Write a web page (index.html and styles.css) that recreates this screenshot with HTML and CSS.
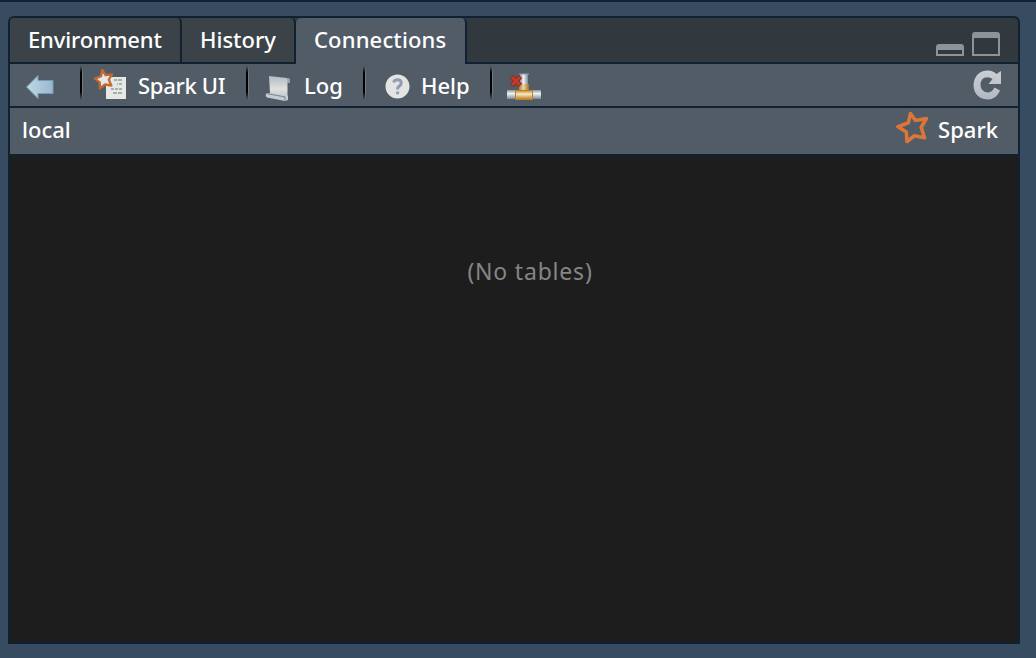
FILE: index.html
```html
<!DOCTYPE html>
<html lang="en">
<head>
<meta charset="utf-8">
<title>Connections</title>
<link rel="stylesheet" href="styles.css">
</head>
<body>
<main class="panel">
  <nav class="tabs">
    <div class="tab tab-env"><span class="t-env">Environment</span></div>
    <div class="tab tab-history"><span class="t-history">History</span></div>
    <div class="tab tab-active"><span class="t-conn">Connections</span></div>
    <div class="window-controls">
      <svg width="28" height="12" viewBox="0 0 28 12"><path fill="#8d9498" fill-rule="evenodd" d="M0 12V3Q0 0 3 0H25Q28 0 28 3V12ZM2 6V10H26V6Z"/></svg>
      <svg width="28" height="24" viewBox="0 0 28 24"><path fill="#8d9498" fill-rule="evenodd" d="M0 24V3Q0 0 3 0H25Q28 0 28 3V24ZM2 6V22H26V6Z"/></svg>
    </div>
  </nav>
  <div class="toolbar">
    <svg class="back" width="30" height="26" viewBox="0 0 30 26"><defs><linearGradient id="arrow" x2="1"><stop stop-color="#bfd8e5"/><stop offset="1" stop-color="#98b7cf"/></linearGradient></defs><path d="M1.500 13 13 1.500V6.500H28V19.500H13V24.500Z" fill="url(#arrow)" stroke="#779bb5"/></svg>
    <i class="sep"></i>
    <svg class="spark-icon" width="32" height="32" viewBox="0 0 32 32"><path fill="#e7e7e3" d="M12 9H32V31H12Z"/><path d="M20 12h3m1 0h4M23 16h1m1 0h3M17 21h3m1 0h3m1 0h3M19 25h4m1 0h4" stroke="#8aa09f" stroke-width="1.7"/><path d="M8.200 1.800 11.500 7.200 18 6.500 14.800 11.600 17.300 17.500 11 16.500 6 20.400 5.800 14.300 1 10.600 7.100 8.200Z" fill="#e4e7e9" stroke="#c76833" stroke-width="2.300" stroke-linejoin="round"/></svg>
    <span class="t-ui">Spark UI</span>
    <i class="sep sep-log"></i>
    <svg class="log-icon" width="26" height="27" viewBox="0 0 26 27"><defs><linearGradient id="paper" x2="0" y2="1"><stop stop-color="#aebbc5"/><stop offset=".6" stop-color="#e1e1de"/><stop offset="1" stop-color="#bdc4c8"/></linearGradient></defs><path d="M4 1 22 3Q25 2.500 25 5.500T22.500 8V23L2 19 5 18Z" fill="url(#paper)"/><path d="M22 3q3-.5 3 2.500t-2.500 2.500z" fill="#91a5b2"/><path d="M1 18.500 5 18 20 21 23 20.500V25L20 26 2 22.500Q0 20.500 1 18.500Z" fill="#c3ccd1"/><path d="m1.500 18.500 19 3.500M19 22q2 1.500 1 3.500" fill="none" stroke="#758693"/></svg>
    <span class="t-log">Log</span>
    <i class="sep sep-help"></i>
    <svg class="help-icon" width="25" height="25" viewBox="0 0 25 25"><circle cx="12.500" cy="12.500" r="12" fill="#e4e4e2"/><path d="M8.700 8.500Q9.200 5.800 12.700 5.800 16.200 5.900 16.200 8.900 16.200 10.900 14 12.300 12.600 13.300 12.600 15.600M12.600 17.600V20.200" fill="none" stroke="#8f9db5" stroke-width="3"/></svg>
    <span class="t-help">Help</span>
    <i class="sep sep-disconnect"></i>
    <svg class="pipe-icon" width="34" height="28" viewBox="0 0 34 28"><defs><linearGradient id="steel" x2="0" y2="1"><stop stop-color="#8894a9"/><stop offset=".4" stop-color="#f2f2f2"/><stop offset="1" stop-color="#7f8898"/></linearGradient><linearGradient id="steel-v" x2="1"><stop stop-color="#8894a9"/><stop offset=".45" stop-color="#eff2f4"/><stop offset="1" stop-color="#7d899c"/></linearGradient><linearGradient id="brass" x2="0" y2="1"><stop stop-color="#c58c37"/><stop offset=".4" stop-color="#f7eac2"/><stop offset="1" stop-color="#b9781f"/></linearGradient><linearGradient id="brass-v" x2="1"><stop stop-color="#b78030"/><stop offset=".45" stop-color="#eed59c"/><stop offset="1" stop-color="#a96f1c"/></linearGradient></defs><path d="M13 1h8v10h-8z" fill="url(#steel-v)"/><path d="M12 1h10" stroke="#939eae"/><path d="M0 17h34v9H0z" fill="url(#steel)"/><path d="M12 11h10v7H12z" fill="url(#brass-v)"/><path d="M8.500 17.500h17v9h-17z" fill="url(#brass)" stroke="#b98029"/><path d="m4.500 3.500 9 9m0-9-9 9" stroke="#8d2d20" stroke-width="4.800"/><path d="m5 4 8 8m0-8-8 8" stroke="#c03c28" stroke-width="3"/></svg>
    <svg class="refresh" width="29" height="30" viewBox="0 0 29 30"><defs><linearGradient id="refresh" x2="0" y2="1"><stop stop-color="#cbcfd4"/><stop offset="1" stop-color="#b2b8c3"/></linearGradient></defs><path fill="url(#refresh)" d="M23.500 4 28 1V14H15.500L19.500 9Q17.500 7.300 14.500 7.300 7.500 7.500 7.500 15 8 22 14.500 22.500 19 22.500 21.500 17.500L27 20.500Q23.500 29.500 14.500 29.500 1 28.500 .5 15 1.500 1 15 .5 20 .7 23.500 4Z"/></svg>
  </div>
  <header class="connection">
    <span class="t-local">local</span>
    <svg class="star" width="33" height="33" viewBox="0 0 33 33"><path d="M14.500 2.500 19.500 9.500 30.500 7.500 25.200 16.300 28.500 26.800 18.500 24.800 11 30.500 10.300 21 2 15.800 12.300 11.800Z" fill="none" stroke="#d97638" stroke-width="3.600" stroke-linejoin="round"/></svg>
    <span class="t-spark">Spark</span>
  </header>
  <section class="content"><span class="t-empty">(No tables)</span></section>
</main>
</body>
</html>
```
FILE: styles.css
```css
* { box-sizing: border-box; }
body {
  margin: 0;
  height: 658px;
  padding: 14px 16px 14px 8px;
  border-top: 2px solid #102131;
  background: #384c61;
  color: #fff;
  font: 500 22px/30px "Noto Sans", sans-serif;
  overflow: hidden;
}
svg { display: block; flex: none; }
span { white-space: nowrap; }
.panel {
  height: 628px;
  border: 2px solid #102131;
  border-radius: 6px 6px 0 0;
  background: #1d1d1d;
  display: flex;
  flex-direction: column;
  overflow: hidden;
}
.tabs {
  display: flex;
  height: 46px;
  background: linear-gradient(#102131, #102131) 0 44px / 100% 2px no-repeat #31383e;
}
.tab {
  height: 46px;
  padding: 6px 0 0 18px;
  border-right: 2px solid #102131;
  border-bottom: 2px solid #102131;
  border-radius: 0 5px 0 0;
  background: #3b4349;
}
.tab-env { width: 172px; letter-spacing: -.15px; }
.tab-history { width: 114px; }
.tab-active { width: 171px; background: #515c67; border-bottom: 0; border-radius: 5px 5px 0 0; letter-spacing: .15px; }
.window-controls { display: flex; align-items: flex-end; gap: 8px; margin: 0 18px 8px auto; }
.toolbar {
  display: flex;
  align-items: flex-start;
  height: 44px;
  background: #515c67;
  border-bottom: 2px solid #102131;
}
.toolbar span { flex: none; margin-top: 6px; }
.t-ui { width: 108px; letter-spacing: -.3px; }
.t-log { width: 59px; }
.t-help { width: 69px; }
.sep {
  width: 4px;
  height: 34px;
  margin-top: 2px;
  flex: none;
  background:
    linear-gradient(transparent, #000 20%, #000 75%, transparent) 0 0 / 2px 100% no-repeat,
    linear-gradient(transparent, #707a83 25%, #707a83 75%, transparent) 2px 0 / 1px 100% no-repeat;
}
.back { margin: 10px 25px 0 15px; }
.spark-icon { margin: 4px 12px 0 10px; }
.log-icon { margin: 11px 13px 0 15px; }
.help-icon { margin: 10px 11px 0 18px; }
.pipe-icon { margin: 9px 0 0 13px; }
.refresh { margin: 6px 16px 0 auto; }
.connection {
  display: flex;
  height: 48px;
  padding: 6px 20px 0 12px;
  background: #515c67;
  border-bottom: 2px solid #102131;
}
.star { margin: -3px 9px 0 auto; }
.content {
  display: flex;
  justify-content: center;
  padding: 100px 0 0 32px;
  color: #858585;
  font-size: 23px;
  font-weight: 400;
  letter-spacing: .8px;
}
```
